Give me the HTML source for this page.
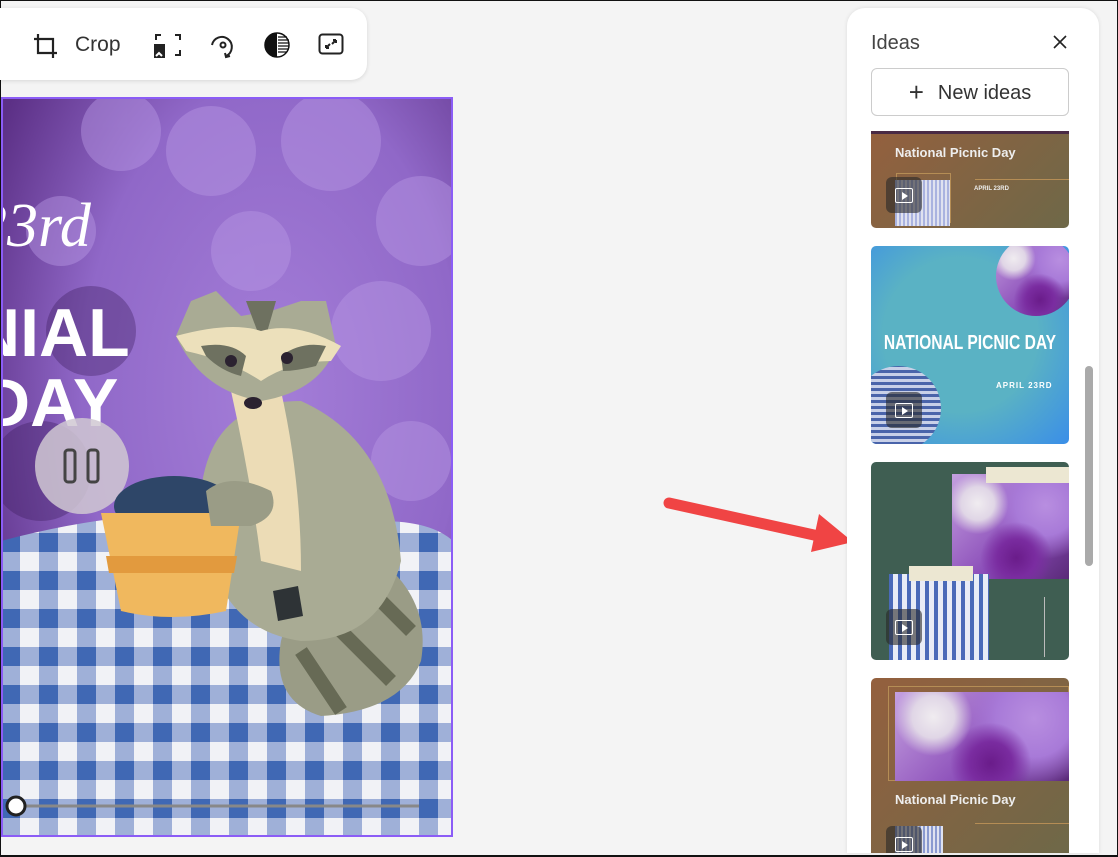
<!DOCTYPE html>
<html><head><meta charset="utf-8"><style>
*{margin:0;padding:0;box-sizing:border-box}
body{width:1118px;height:857px;background:#f4f4f4;position:relative;overflow:hidden;font-family:"Liberation Sans",sans-serif;border:1px solid #111;border-bottom:2px solid #111}
.tb{position:absolute;left:-20px;top:7px;width:386px;height:72px;background:#fff;border-radius:16px;box-shadow:0 1px 4px rgba(0,0,0,.12)}
.ab{position:absolute}
.panel{position:absolute;left:846px;top:7px;width:252px;height:845px;background:#fff;border-radius:18px 18px 0 0;box-shadow:0 0 4px rgba(0,0,0,.1);overflow:hidden}
.card{position:absolute;left:24px;width:198px;border-radius:5px;overflow:hidden}
.play{position:absolute;width:36px;height:36px;background:rgba(40,40,40,.6);border-radius:6px}
.play:after{content:"";position:absolute;left:9px;top:11px;width:16px;height:13px;border:1.5px solid #fff;border-radius:2px}
.play:before{content:"";position:absolute;left:16px;top:15px;border-left:6px solid #fff;border-top:4px solid transparent;border-bottom:4px solid transparent;z-index:1}
.fl{background:radial-gradient(circle at 22% 28%,#f0ecf0 0,#e0d6e6 14%,transparent 26%),radial-gradient(circle at 55% 80%,#6a1c8a 0,#7a2ca0 18%,transparent 34%),radial-gradient(circle at 80% 30%,#b88ee0 0,#a87ad8 25%,transparent 45%),linear-gradient(135deg,#c4a0e0,#8a4cb8 60%,#5a2a78)}
</style></head><body>
<div class="tb"></div>
<svg class="ab" style="left:30px;top:30px" width="30" height="30" viewBox="0 0 30 30" fill="none" stroke="#222" stroke-width="2.2"><path d="M7 3v19h19M3 8h19v19"/></svg>
<div class="ab" style="left:74px;top:32px;font-size:21px;color:#333">Crop</div>
<svg class="ab" style="left:152px;top:30px" width="30" height="28" viewBox="0 0 30 28" fill="none" stroke="#222" stroke-width="2"><path d="M3 9V4h5M22 4h5v5M27 19v5h-5M10 24H8"/><rect x="2" y="14" width="9" height="12" fill="#222"/><path d="M3 25l3-3 3 3" stroke="#fff"/></svg>
<svg class="ab" style="left:207px;top:30px" width="30" height="30" viewBox="0 0 30 30" fill="none" stroke="#222" stroke-width="2"><path d="M4 14a10 10 0 1 1 14 11"/><circle cx="15" cy="14" r="2.5"/><path d="M17 22l1 4 4-1"/></svg>
<svg class="ab" style="left:262px;top:30px" width="28" height="28" viewBox="0 0 28 28"><circle cx="14" cy="14" r="12" fill="none" stroke="#111" stroke-width="1.5"/><path d="M14 2a12 12 0 0 0 0 24z" fill="#111"/><path d="M15 6h9M15 9h11M15 12h11M15 15h11M15 18h11M15 21h9" stroke="#111" stroke-width="1.3"/></svg>
<svg class="ab" style="left:317px;top:32px" width="26" height="22" viewBox="0 0 26 22" fill="none" stroke="#222" stroke-width="2"><rect x="1.5" y="1.5" width="23" height="19" rx="3"/><path d="M8 15l4-4M8 15v-3M8 15h3M18 7l-4 4M18 7v3M18 7h-3"/></svg>

<svg class="ab" style="left:0;top:96px" width="452" height="740" viewBox="0 96 452 740">
<defs>
<pattern id="g" x="0" y="0" width="38" height="38" patternUnits="userSpaceOnUse">
<rect width="38" height="38" fill="#f1f2f6"/><rect x="0" y="0" width="19" height="38" fill="#9fb0d8"/><rect x="0" y="0" width="38" height="19" fill="#9fb0d8"/><rect x="0" y="0" width="19" height="19" fill="#4068b4"/>
</pattern>
<radialGradient id="fl" cx=".6" cy=".4" r=".7"><stop offset="0" stop-color="#a47ed8"/><stop offset=".6" stop-color="#9068c8"/><stop offset="1" stop-color="#5c3086"/></radialGradient>
</defs>
<rect x="0" y="96" width="452" height="740" fill="url(#fl)"/>
<g fill="#b898e4" opacity=".45">
<circle cx="210" cy="150" r="45"/><circle cx="330" cy="140" r="50"/><circle cx="420" cy="220" r="45"/><circle cx="120" cy="130" r="40"/><circle cx="380" cy="330" r="50"/><circle cx="250" cy="250" r="40"/><circle cx="410" cy="460" r="40"/><circle cx="60" cy="230" r="35"/></g>
<g fill="#3a1a5a" opacity=".35"><circle cx="90" cy="330" r="45"/><circle cx="40" cy="470" r="50"/></g>
<path d="M0 540 Q150 500 260 520 L380 520 Q430 520 452 540 V836 H0Z" fill="url(#g)"/>
<text x="-25" y="245" font-family="Liberation Serif" font-style="italic" font-size="62" fill="#fff">23rd</text>
<text x="-30" y="355" font-family="Liberation Sans" font-weight="bold" font-size="68" fill="#fff">NIAL</text>
<text x="-20" y="425" font-family="Liberation Sans" font-weight="bold" font-size="68" fill="#fff">DAY</text>
<ellipse cx="81" cy="465" rx="47" ry="48" fill="#d0c8d2" opacity=".85"/>
<rect x="64" y="449" width="10" height="32" rx="3" fill="none" stroke="#444" stroke-width="3"/><rect x="87" y="449" width="10" height="32" rx="3" fill="none" stroke="#444" stroke-width="3"/>
<path d="M280 640 Q300 560 380 560 Q430 600 420 660 Q400 710 320 715 Q270 700 280 640Z" fill="#9a9c86"/>
<g stroke="#676a55" stroke-width="14"><path d="M300 650l40 60M330 620l60 60M370 590l40 40"/></g>
<path d="M200 490 Q210 400 300 400 Q390 440 400 560 Q380 640 300 640 Q230 630 210 560Z" fill="#a9ab94"/>
<path d="M230 390 Q250 480 260 560 L300 570 Q300 480 280 390Z" fill="#ecdcb6"/>
<path d="M190 300 L215 290 L240 315 L270 310 L300 300 L325 300 L335 345 Q320 390 260 400 Q200 390 175 335Z" fill="#a9ab94"/>
<path d="M245 300 L275 300 L262 345Z" fill="#6e7160"/>
<path d="M175 335 Q230 320 260 330 Q295 320 340 345 L330 360 Q290 360 260 380 Q230 360 185 350Z" fill="#ece0bb"/>
<path d="M200 345 Q230 340 245 355 L240 375 Q220 370 205 355Z M280 355 Q300 340 325 345 L315 365 Q295 370 282 370Z" fill="#6e7160"/>
<circle cx="230" cy="360" r="6" fill="#2b2230"/><circle cx="286" cy="357" r="6" fill="#2b2230"/>
<ellipse cx="252" cy="402" rx="9" ry="6" fill="#2b2230"/>
<path d="M272 590 l25 -5 5 30 -25 5z" fill="#2e3336"/>
<ellipse cx="173" cy="505" rx="60" ry="30" fill="#2e4668"/>
<path d="M100 512 L240 512 L225 610 Q170 622 120 610Z" fill="#f0b85e"/>
<path d="M105 555 L236 555 L233 572 L108 572Z" fill="#e29a3e"/>
<path d="M205 490 Q230 470 270 490 Q280 515 250 525 L210 525Z" fill="#9a9c86"/>
<rect x="1" y="97" width="450" height="738" fill="none" stroke="#8b5cf6" stroke-width="2"/>
<line x1="15" y1="805" x2="418" y2="805" stroke="#888" stroke-width="3"/>
<circle cx="15" cy="805" r="9" fill="#fff" stroke="#222" stroke-width="3"/>
</svg>

<svg class="ab" style="left:655px;top:490px" width="210" height="70" viewBox="655 490 210 70"><line x1="668" y1="502" x2="822" y2="536" stroke="#f04444" stroke-width="11" stroke-linecap="round"/><path d="M818 513 L852 541 L810 551Z" fill="#f04444"/></svg>

<div class="panel">
<div class="ab" style="left:24px;top:24px;font-size:20px;color:#444">Ideas</div>
<svg class="ab" style="left:205px;top:26px" width="16" height="16" viewBox="0 0 16 16" stroke="#222" stroke-width="1.6"><path d="M2 2l12 12M14 2L2 14"/></svg>
<div class="ab" style="left:24px;top:60px;width:198px;height:48px;border:1px solid #ccc;border-radius:6px;font-size:20px;color:#333;text-align:center;line-height:46px"><span style="font-size:26px;font-weight:300;margin-right:14px;vertical-align:-2px">+</span>New ideas</div>
<div class="card" style="top:123px;height:97px;background:linear-gradient(135deg,#94603e,#6e6848);border-radius:0 0 5px 5px">
<div class="ab" style="left:0;top:0;width:198px;height:3px;background:#4a2a44"></div>
<div class="ab" style="left:24px;top:14px;font-size:13px;color:#eee;font-weight:bold">National Picnic Day</div>
<div class="ab" style="left:25px;top:42px;width:55px;height:50px;border:1px solid #b58d55"></div>
<div class="ab" style="left:24px;top:49px;width:55px;height:46px;background:repeating-linear-gradient(90deg,#aab3e0 0 2px,#e0e2f0 2px 4px)"></div>
<div class="ab" style="left:104px;top:48px;width:94px;height:1px;background:#b58d55"></div>
<div class="ab" style="left:103px;top:55px;font-size:6px;color:#eee;font-weight:bold">APRIL 23RD</div>
<div class="play" style="left:15px;top:46px"></div></div>
<div class="card" style="top:238px;height:198px;background:radial-gradient(ellipse at 45% 45%,#5ab2c4 50%,#3a8ee8 100%)">
<div class="ab fl" style="left:125px;top:-10px;width:80px;height:80px;border-radius:50%"></div>
<div class="ab" style="left:-15px;top:120px;width:85px;height:85px;border-radius:50%;background:repeating-linear-gradient(0deg,#4a64aa 0 3px,#c8d0e8 3px 6px),#ccc"></div>
<div class="ab" style="left:-20px;top:86px;width:238px;text-align:center;font-size:20px;color:#fff;font-weight:bold;transform:scaleX(.78);white-space:nowrap">NATIONAL PICNIC DAY</div>
<div class="ab" style="left:125px;top:135px;font-size:8px;color:#fff;font-weight:bold;letter-spacing:1px">APRIL 23RD</div>
<div class="play" style="left:15px;top:146px"></div></div>
<div class="card" style="top:454px;height:198px;background:#3f5e52">
<div class="ab fl" style="left:81px;top:12px;width:117px;height:105px"></div>
<div class="ab" style="left:115px;top:5px;width:83px;height:16px;background:#ece7d2"></div>
<div class="ab" style="left:18px;top:112px;width:100px;height:86px;background:repeating-linear-gradient(90deg,#4a6ab8 0 4px,#e8ecf6 4px 9px)"></div>
<div class="ab" style="left:38px;top:104px;width:64px;height:15px;background:#ece7d2"></div>
<div class="ab" style="left:173px;top:135px;width:1px;height:60px;background:#bbb"></div>
<div class="play" style="left:15px;top:147px"></div></div>
<div class="card" style="top:670px;height:175px;background:linear-gradient(135deg,#94603e,#6e6848);border-radius:5px 5px 0 0">
<div class="ab" style="left:17px;top:8px;width:181px;height:95px;border:1px solid #b58d55"></div>
<div class="ab fl" style="left:24px;top:14px;width:174px;height:89px"></div>
<div class="ab" style="left:24px;top:114px;font-size:13px;color:#eee;font-weight:bold">National Picnic Day</div>
<div class="ab" style="left:24px;top:148px;width:48px;height:30px;background:repeating-linear-gradient(90deg,#8a9ad0 0 2px,#dfe2f0 2px 4px)"></div>
<div class="ab" style="left:104px;top:145px;width:94px;height:1px;background:#b58d55"></div>
<div class="play" style="left:15px;top:148px"></div></div>
<div class="ab" style="left:238px;top:358px;width:8px;height:200px;border-radius:4px;background:#aaa"></div>
</div>
</body></html>
